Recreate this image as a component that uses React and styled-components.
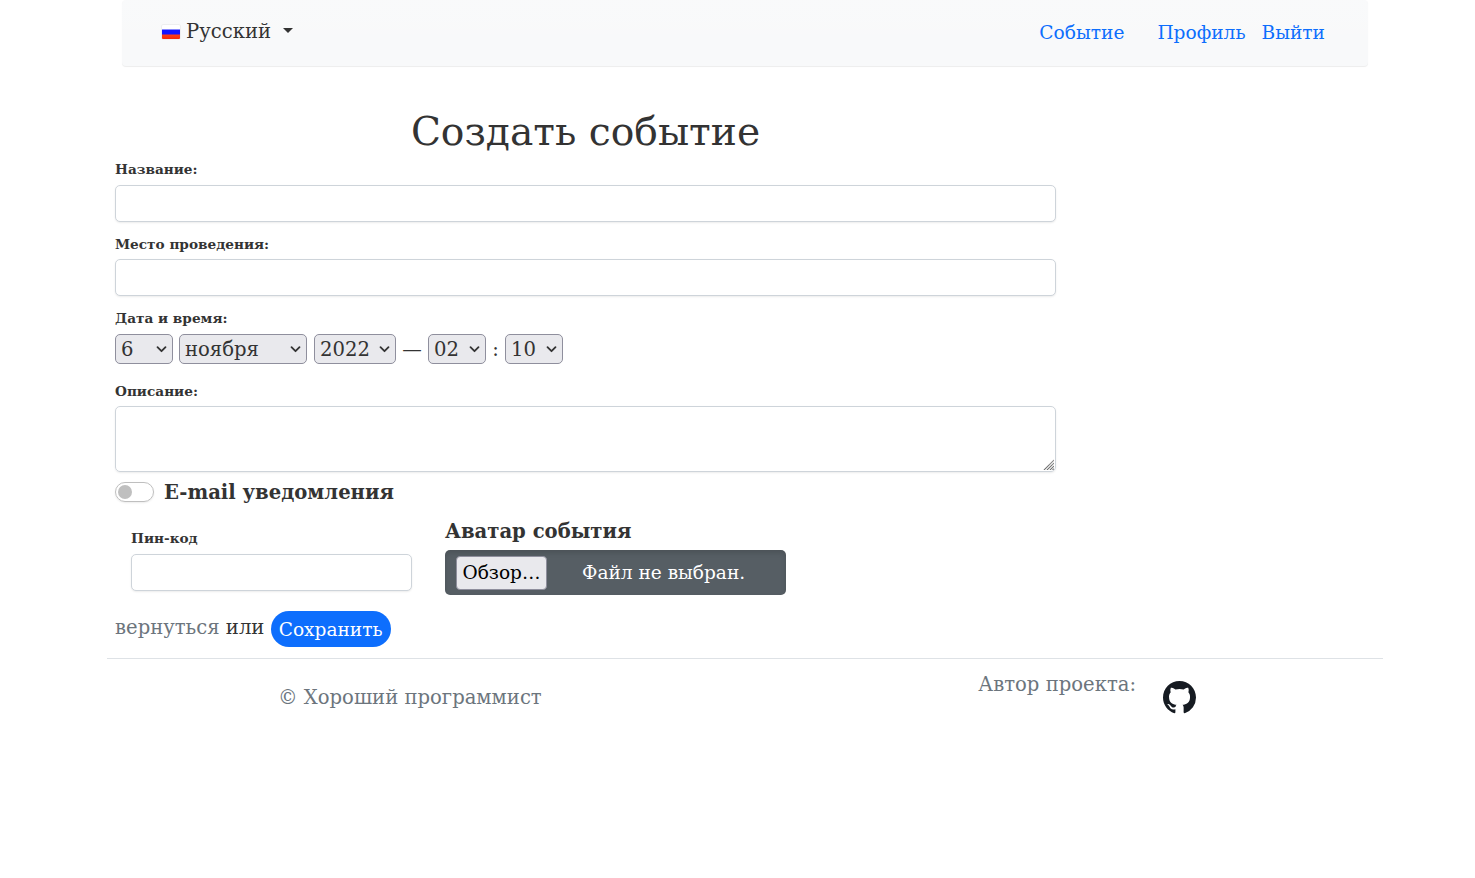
import React from "react";
import styled, { createGlobalStyle } from "styled-components";

const GlobalStyle = createGlobalStyle`
  * { box-sizing: border-box; }
  body {
    margin: 0;
    background: #fff;
    color: #333;
    font-family: "DejaVu Serif", serif;
    font-size: 19.6px;
    line-height: 30px;
    overflow-x: hidden;
  }
  a { text-decoration: none; }
`;

const Container = styled.div`
  width: 1276px;
  margin-left: 107px;
`;

const Navbar = styled.nav`
  display: flex;
  align-items: flex-start;
  justify-content: space-between;
  height: 66px;
  margin: 0 15px;
  padding: 16px 43px 0 40px;
  border-radius: 4px;
  background: #f8f9fa linear-gradient(180deg, rgba(255, 255, 255, 0.15), rgba(255, 255, 255, 0));
  box-shadow: 0 1px 1px rgba(0, 0, 0, 0.075);
`;

const Language = styled.div`
  display: flex;
  align-items: center;
  padding-top: 1px;
  white-space: nowrap;
`;

const Flag = styled.span`
  width: 18px;
  height: 14px;
  margin: 0 6px 0 0;
  border-radius: 1px;
  background: linear-gradient(180deg, #fff 0 4px, #1414ff 5px 9px, #ff3d14 10px, #f4280a 14px);
  box-shadow: 0 0 1px rgba(0, 0, 0, 0.45);
`;

const Caret = styled.span`
  margin: -3px 0 0 12px;
  border-top: 5px solid #333;
  border-left: 5px solid transparent;
  border-right: 5px solid transparent;
`;

const NavLinks = styled.div`
  display: flex;
  padding-top: 2px;
  font-size: 18.58px;
`;

const NavLink = styled.a`
  color: #0d6efd;
  margin-left: ${(p) => p.$gap || 0}px;
`;

const Form = styled.form`
  width: 941px;
  margin: 42px 0 0 8px;
`;

const Title = styled.h1`
  margin: 0 0 5px;
  font-size: 39.2px;
  line-height: 48px;
  font-weight: 400;
  text-align: center;
`;

const Field = styled.div`
  margin-bottom: ${(p) => p.$after}px;
`;

const Label = styled.label`
  display: block;
  margin-bottom: ${(p) => p.$gap || 8}px;
  font-size: 13.65px;
  line-height: 16px;
  font-weight: 700;
`;

const Input = styled.input`
  display: block;
  width: 100%;
  height: 37px;
  border: 1px solid #ced4da;
  border-radius: 5px;
  background: #fff;
  box-shadow: 0 1px 2px rgba(0, 0, 0, 0.08);
`;

const TextBox = styled.div`
  display: flex;
  align-items: flex-end;
  justify-content: flex-end;
  height: 66px;
  padding: 0 1px 1px 0;
  border: 1px solid #ced4da;
  border-radius: 5px;
  box-shadow: 0 1px 2px rgba(0, 0, 0, 0.08);
`;

const DateRow = styled.div`
  display: flex;
  height: 30px;
`;

const Select = styled.div`
  display: flex;
  align-items: center;
  justify-content: space-between;
  width: ${(p) => p.$width}px;
  margin-right: ${(p) => p.$after || 0}px;
  padding: 2px 5.5px 0 5px;
  border: 1px solid #8f8f9d;
  border-radius: 5px;
  background: #e9e9ed;
  svg { margin-top: -2px; }
`;

const Separator = styled.span`
  width: ${(p) => p.$width}px;
  padding-top: 1px;
  text-align: center;
`;

const SwitchRow = styled.div`
  display: flex;
  align-items: center;
  height: 20px;
  padding-top: 2px;
  font-weight: 700;
`;

const Switch = styled.span`
  display: flex;
  align-items: center;
  width: 39px;
  height: 20px;
  margin: -2px 10px 0 0;
  padding-left: 2px;
  border: 1px solid #bfbfbf;
  border-radius: 10px;
  box-shadow: 0 1px 2px rgba(0, 0, 0, 0.08);
  &::before {
    content: "";
    width: 14px;
    height: 14px;
    border-radius: 50%;
    background: #bfbfbf;
  }
`;

const Columns = styled.div`
  display: flex;
  align-items: flex-start;
  margin-top: 14px;
`;

const PinField = styled.div`
  width: 281px;
  margin: 14px 33px 0 16px;
`;

const AvatarField = styled.div`
  width: 341px;
`;

const AvatarTitle = styled.div`
  padding-top: 1px;
  margin-bottom: 3px;
  font-weight: 700;
`;

const FileInput = styled.div`
  display: flex;
  align-items: center;
  height: 45px;
  padding-left: 11px;
  border-radius: 5px;
  background: #565e64;
  box-shadow: inset 0 3px 5px rgba(0, 0, 0, 0.125);
  color: #fff;
  font-size: 18.55px;
`;

const Browse = styled.span`
  width: 91px;
  height: 34px;
  margin-right: 35px;
  border: 1px solid #8f8f9d;
  border-radius: 4px;
  background: #e9e9ed;
  color: #000;
  line-height: 32px;
  text-align: center;
  white-space: nowrap;
`;

const Actions = styled.div`
  display: flex;
  align-items: flex-start;
  margin-top: 16px;
  line-height: 34px;
  white-space: pre;
`;

const BackLink = styled.a`
  color: #6c757d;
`;

const Save = styled.button`
  width: 120px;
  height: 36px;
  padding: 1px 0 0;
  border: 0;
  border-radius: 18px;
  background: #0d6efd;
  color: #fff;
  font: 18.55px/35px "DejaVu Serif", serif;
`;

const Footer = styled.footer`
  display: flex;
  margin-top: 11px;
  padding: 11px 187px 0 171px;
  border-top: 1px solid #dee2e6;
  color: #6c757d;
`;

const Copyright = styled.div`
  margin: 13px auto 0 0;
`;

const Author = styled.div`
  margin-right: 27px;
`;

const GithubLink = styled.a`
  display: block;
  height: 33px;
  margin-top: 11px;
`;

const Chevron = () => (
  <svg width="11" height="8" viewBox="0 0 11 8" fill="none" stroke="#333" strokeWidth="1.8" strokeLinecap="round" strokeLinejoin="round">
    <path d="M1.5 2.2l4 4 4-4" />
  </svg>
);

const Grip = () => (
  <svg width="11" height="11" viewBox="0 0 11 11" stroke="#666" strokeWidth="1.1" strokeDasharray="1.1 0.3">
    <path d="M1 11L11 1M4 11L11 4M7 11L11 7M9.6 11L11 9.6" />
  </svg>
);

const Github = () => (
  <svg width="33" height="33" viewBox="0 0 16 16" fill="#161b22">
    <path d="M8 0C3.58 0 0 3.58 0 8c0 3.54 2.29 6.53 5.47 7.59.4.07.55-.17.55-.38 0-.19-.01-.82-.01-1.49-2.01.37-2.53-.49-2.69-.94-.09-.23-.48-.94-.82-1.13-.28-.15-.68-.52-.01-.53.63-.01 1.08.58 1.23.82.72 1.21 1.87.87 2.33.66.07-.52.28-.87.51-1.07-1.78-.2-3.64-.89-3.64-3.95 0-.87.31-1.59.82-2.15-.08-.2-.36-1.02.08-2.12 0 0 .67-.21 2.2.82.64-.18 1.32-.27 2-.27s1.36.09 2 .27c1.53-1.04 2.2-.82 2.2-.82.44 1.1.16 1.92.08 2.12.51.56.82 1.27.82 2.15 0 3.07-1.87 3.75-3.65 3.95.29.25.54.73.54 1.48 0 1.07-.01 1.93-.01 2.2 0 .21.15.46.55.38A8.01 8.01 0 0 0 16 8c0-4.42-3.58-8-8-8z" />
  </svg>
);

export default function App() {
  return (
    <>
      <GlobalStyle />
      <Container>
        <Navbar>
          <Language><Flag />Русский<Caret /></Language>
          <NavLinks>
            <NavLink href="#">Событие</NavLink>
            <NavLink href="#" $gap={33}>Профиль</NavLink>
            <NavLink href="#" $gap={16}>Выйти</NavLink>
          </NavLinks>
        </Navbar>
        <Form>
          <Title>Создать событие</Title>
          <Field $after={14}>
            <Label htmlFor="title">Название:</Label>
            <Input id="title" />
          </Field>
          <Field $after={14}>
            <Label htmlFor="place" $gap={7}>Место проведения:</Label>
            <Input id="place" />
          </Field>
          <Field $after={19}>
            <Label>Дата и время:</Label>
            <DateRow>
              <Select $width={58} $after={6}>6<Chevron /></Select>
              <Select $width={128} $after={7}>ноября<Chevron /></Select>
              <Select $width={82}>2022<Chevron /></Select>
              <Separator $width={32}>—</Separator>
              <Select $width={58}>02<Chevron /></Select>
              <Separator $width={19}>:</Separator>
              <Select $width={58}>10<Chevron /></Select>
            </DateRow>
          </Field>
          <Field $after={10}>
            <Label $gap={7}>Описание:</Label>
            <TextBox><Grip /></TextBox>
          </Field>
          <SwitchRow><Switch />E-mail уведомления</SwitchRow>
          <Columns>
            <PinField>
              <Label htmlFor="pin">Пин-код</Label>
              <Input id="pin" />
            </PinField>
            <AvatarField>
              <AvatarTitle>Аватар события</AvatarTitle>
              <FileInput><Browse>Обзор…</Browse>Файл не выбран.</FileInput>
            </AvatarField>
          </Columns>
          <Actions>
            <BackLink href="#">вернуться</BackLink> или <Save type="button">Сохранить</Save>
          </Actions>
        </Form>
        <Footer>
          <Copyright>© Хороший программист</Copyright>
          <Author>Автор проекта:</Author>
          <GithubLink href="#"><Github /></GithubLink>
        </Footer>
      </Container>
    </>
  );
}
